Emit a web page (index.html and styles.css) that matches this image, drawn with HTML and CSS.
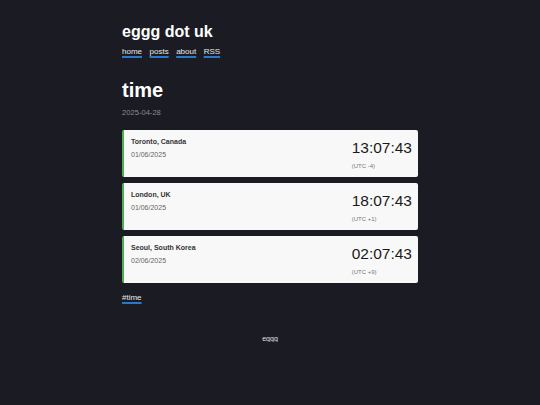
FILE: index.html
```html
<!DOCTYPE html>
<html>
<head>
<meta charset="utf-8">
<link rel="stylesheet" href="styles.css">
</head>
<body>
<div class="page">
  <header class="site-header">
    <div class="site-title">eggg dot uk</div>
    <nav class="nav">
      <a href="#">home</a>
      <a href="#">posts</a>
      <a href="#">about</a>
      <a href="#">RSS</a>
    </nav>
  </header>
  <main>
    <h1 class="post-title">time</h1>
    <div class="post-date">2025-04-28</div>
    <div class="clocks">
      <div class="clock">
        <div class="clock-left">
          <div class="city">Toronto, Canada</div>
          <div class="cdate">01/06/2025</div>
        </div>
        <div class="clock-right">
          <div class="ctime">13:07:43</div>
          <div class="utc">(UTC -4)</div>
        </div>
      </div>
      <div class="clock">
        <div class="clock-left">
          <div class="city">London, UK</div>
          <div class="cdate">01/06/2025</div>
        </div>
        <div class="clock-right">
          <div class="ctime">18:07:43</div>
          <div class="utc">(UTC +1)</div>
        </div>
      </div>
      <div class="clock">
        <div class="clock-left">
          <div class="city">Seoul, South Korea</div>
          <div class="cdate">02/06/2025</div>
        </div>
        <div class="clock-right">
          <div class="ctime">02:07:43</div>
          <div class="utc">(UTC +9)</div>
        </div>
      </div>
    </div>
    <div class="tags"><a href="#">#time</a></div>
  </main>
  <footer class="footer">eggg</footer>
</div>
</body>
</html>
```
FILE: styles.css
```css
html, body {
  margin: 0;
  padding: 0;
  background: #1b1c23;
  color: #ffffff;
  font-family: "Liberation Sans", Arial, sans-serif;
}
.page {
  width: 296px;
  margin: 0 auto;
  padding-top: 23px;
}
.site-title {
  font-size: 16px;
  font-weight: bold;
  line-height: 18px;
}
.nav {
  display: flex;
  gap: 7.5px;
  margin-top: 6px;
  font-size: 8px;
  line-height: 10px;
}
a {
  color: #e8e8e8;
  text-decoration: underline;
  text-decoration-color: #2a78c8;
  text-decoration-thickness: 2px;
  text-underline-offset: 1.5px;
}
.post-title {
  margin: 22px 0 0 0;
  font-size: 20px;
  line-height: 22px;
  font-weight: bold;
}
.post-date {
  margin-top: 7px;
  font-size: 7.6px;
  line-height: 10px;
  color: #8a8a8f;
}
.clocks {
  margin-top: 12px;
  display: flex;
  flex-direction: column;
  gap: 6px;
}
.clock {
  background: #f8f8f8;
  border-left: 2px solid #4caf50;
  border-radius: 2px;
  height: 47px;
  box-sizing: border-box;
  display: flex;
  justify-content: space-between;
  padding: 6px 6px 0 7px;
  color: #222;
}
.city {
  font-size: 7px;
  font-weight: bold;
  line-height: 9px;
  margin-top: 1px;
  color: #333;
}
.cdate {
  font-size: 7px;
  line-height: 9px;
  margin-top: 4px;
  color: #666;
}
.clock-right {
  display: flex;
  flex-direction: column;
  align-items: flex-start;
  padding-top: 3px;
}
.ctime {
  font-size: 15.5px;
  line-height: 18px;
  color: #1a1a1a;
}
.utc {
  font-size: 6px;
  line-height: 8px;
  color: #777;
  margin-top: 5px;
}
.tags {
  margin-top: 10px;
  font-size: 8px;
  line-height: 10px;
}
.footer {
  margin-top: 32px;
  text-align: center;
  font-size: 7px;
  color: #e0e0e0;
}
```
